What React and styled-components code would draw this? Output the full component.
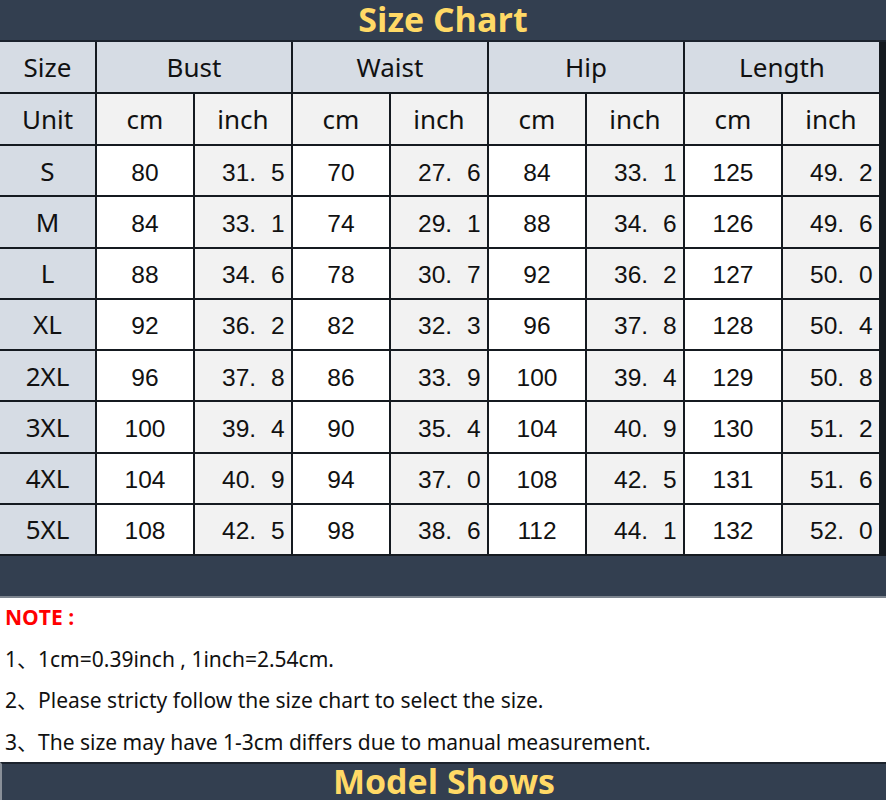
import React from "react";
import styled, { createGlobalStyle } from "styled-components";

const GlobalStyle = createGlobalStyle`
  html, body {
    margin: 0;
    padding: 0;
    background: #ffffff;
  }
  body {
    width: 886px;
    height: 800px;
    overflow: hidden;
    font-family: "Noto Sans", "Noto Sans CJK SC", sans-serif;
  }
`;

const groups = ["Bust", "Waist", "Hip", "Length"];

const rows = [
  ["S", "80", "31.5", "70", "27.6", "84", "33.1", "125", "49.2"],
  ["M", "84", "33.1", "74", "29.1", "88", "34.6", "126", "49.6"],
  ["L", "88", "34.6", "78", "30.7", "92", "36.2", "127", "50.0"],
  ["XL", "92", "36.2", "82", "32.3", "96", "37.8", "128", "50.4"],
  ["2XL", "96", "37.8", "86", "33.9", "100", "39.4", "129", "50.8"],
  ["3XL", "100", "39.4", "90", "35.4", "104", "40.9", "130", "51.2"],
  ["4XL", "104", "40.9", "94", "37.0", "108", "42.5", "131", "51.6"],
  ["5XL", "108", "42.5", "98", "38.6", "112", "44.1", "132", "52.0"],
];

const notes = [
  "1、1cm=0.39inch , 1inch=2.54cm.",
  "2、Please stricty follow the size chart to select the size.",
  "3、The size may have 1-3cm differs due to manual measurement.",
];

const Page = styled.div`
  width: 886px;
  display: flex;
  flex-direction: column;
`;

const Banner = styled.div`
  height: ${(p) => p.$h}px;
  flex-shrink: 0;
  background: #333f50;
  border-bottom: ${(p) => (p.$edge ? "2px solid #1c232d" : "none")};
  border-top: ${(p) => (p.$top ? "2px solid #1c232d" : "none")};
  border-left: ${(p) => (p.$top ? "2px solid #8a9099" : "none")};
  display: flex;
  align-items: center;
  justify-content: center;
  color: #ffd966;
  font-family: "Open Sans", "Noto Sans", sans-serif;
  font-weight: 700;
  font-size: ${(p) => p.$size}px;
  line-height: ${(p) => p.$lh};
  box-sizing: border-box;
`;

const Sheet = styled.div`
  display: grid;
  grid-template-columns: 95px repeat(8, 96px);
  grid-template-rows: 50px 50px repeat(8, 49.25px);
  gap: 2px;
  padding: 0 2px 2px 0;
  background: #151a20;
  width: 886px;
  box-sizing: border-box;
`;

const Cell = styled.div`
  display: flex;
  align-items: center;
  justify-content: ${(p) => (p.$dec ? "flex-start" : "center")};
  padding-left: ${(p) => (p.$dec ? 27 : 0)}px;
  padding-top: ${(p) => (p.$num ? 4 : 0)}px;
  background: ${(p) =>
    p.$kind === "head" ? "#d6dce4" : p.$kind === "alt" ? "#f2f2f2" : "#ffffff"};
  grid-column: span ${(p) => p.$span || 1};
  color: #111111;
  font-family: ${(p) =>
    p.$num ? '"Liberation Sans", Arial, sans-serif' : '"Noto Sans", "Open Sans", sans-serif'};
  font-size: ${(p) => (p.$num ? 24.5 : 26)}px;
  box-sizing: border-box;
`;

const Dot = styled.span`
  margin-right: 15px;
`;

const Footer = styled.div`
  height: 42px;
  flex-shrink: 0;
  background: #333f50;
  border-bottom: 2px solid #7d858f;
  box-sizing: border-box;
`;

const Notes = styled.div`
  display: flex;
  flex-direction: column;
  padding-left: 5px;
  height: 164px;
  flex-shrink: 0;
  box-sizing: border-box;
`;

const NoteTitle = styled.div`
  color: #ff0000;
  font-family: "Open Sans", "Noto Sans", sans-serif;
  font-weight: 700;
  font-size: 21px;
  height: 39px;
  display: flex;
  align-items: center;
`;

const NoteLine = styled.div`
  color: #111111;
  font-family: "Noto Sans", "Noto Sans CJK SC", sans-serif;
  font-size: 21px;
  height: 41.7px;
  display: flex;
  align-items: center;
  white-space: nowrap;
`;

const renderNum = (v) => {
  const i = v.indexOf(".");
  if (i < 0) return v;
  return (
    <>
      {v.slice(0, i)}
      <Dot>.</Dot>
      {v.slice(i + 1)}
    </>
  );
};

const App = () => {
  return (
    <Page>
      <GlobalStyle />
      <Banner $h={42} $size={34} $lh={1.15} $edge>
        Size Chart
      </Banner>
      <Sheet>
        <Cell $kind="head">Size</Cell>
        {groups.map((g) => (
          <Cell key={g} $kind="head" $span={2}>
            {g}
          </Cell>
        ))}
        <Cell $kind="head">Unit</Cell>
        {groups.map((g) => (
          <React.Fragment key={g}>
            <Cell $kind="alt">cm</Cell>
            <Cell $kind="alt">inch</Cell>
          </React.Fragment>
        ))}
        {rows.map((r) => (
          <React.Fragment key={r[0]}>
            <Cell $kind="head">{r[0]}</Cell>
            {r.slice(1).map((v, i) => (
              <Cell
                key={i}
                $num
                $dec={i % 2 === 1}
                $kind={i % 2 === 1 ? "alt" : "plain"}
              >
                {renderNum(v)}
              </Cell>
            ))}
          </React.Fragment>
        ))}
      </Sheet>
      <Footer />
      <Notes>
        <NoteTitle>NOTE :</NoteTitle>
        {notes.map((n) => (
          <NoteLine key={n}>{n}</NoteLine>
        ))}
      </Notes>
      <Banner $h={38} $size={34} $lh={1.05} $top>
        Model Shows
      </Banner>
    </Page>
  );
};

export default App;
